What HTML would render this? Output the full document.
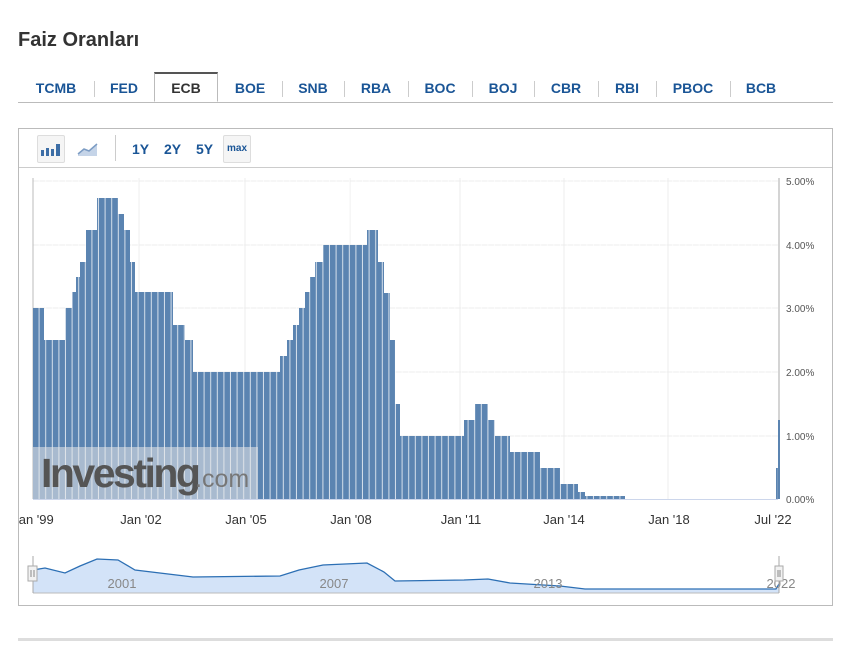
<!DOCTYPE html>
<html><head><meta charset="utf-8"><style>
body{margin:0;width:846px;height:657px;background:#fff;font-family:"Liberation Sans",Arial,sans-serif;position:relative;overflow:hidden}
h1{position:absolute;left:18px;top:29px;margin:0;font-size:20px;font-weight:bold;color:#333}
.tabs{position:absolute;left:18px;top:74px;width:815px;height:28px;border-bottom:1px solid #bbb}
.tab{position:absolute;top:0;height:28px;line-height:29px;text-align:center;font-size:14px;font-weight:bold;color:#1a5596}
.sep{position:absolute;top:7px;width:1px;height:16px;background:#ccc}
.act{color:#333;border:1px solid #bbb;border-top:2px solid #555;border-bottom:1px solid #fff;background:#fff;height:27px;top:-2px;box-sizing:content-box}
.box{position:absolute;left:18px;top:128px;width:813px;height:476px;border:1px solid #bbb}
.tb{position:absolute;left:0;top:0;width:813px;height:38px;border-bottom:1px solid #ccc}
.btn{position:absolute;top:6px;width:26px;height:26px;border:1px solid #ddd;border-radius:2px;background:#f5f5f5}
.per{position:absolute;top:12px;font-size:14px;font-weight:bold;color:#1a5596}
.bot{position:absolute;left:18px;top:638px;width:815px;height:3px;background:#ddd}
</style></head><body>
<h1>Faiz Oranları</h1>
<div class="tabs">
<div class="tab" style="left:0;width:76px">TCMB</div><div class="sep" style="left:76px"></div>
<div class="tab" style="left:76px;width:60px">FED</div>
<div class="tab act" style="left:136px;width:62px">ECB</div>
<div class="tab" style="left:200px;width:64px">BOE</div><div class="sep" style="left:264px"></div>
<div class="tab" style="left:264px;width:62px">SNB</div><div class="sep" style="left:326px"></div>
<div class="tab" style="left:326px;width:64px">RBA</div><div class="sep" style="left:390px"></div>
<div class="tab" style="left:390px;width:64px">BOC</div><div class="sep" style="left:454px"></div>
<div class="tab" style="left:454px;width:62px">BOJ</div><div class="sep" style="left:516px"></div>
<div class="tab" style="left:516px;width:64px">CBR</div><div class="sep" style="left:580px"></div>
<div class="tab" style="left:580px;width:58px">RBI</div><div class="sep" style="left:638px"></div>
<div class="tab" style="left:638px;width:74px">PBOC</div><div class="sep" style="left:712px"></div>
<div class="tab" style="left:712px;width:62px">BCB</div>
</div>
<div class="box">
<div class="tb">
<div class="btn" style="left:18px"><svg width="26" height="26"><rect x="3" y="14" width="3" height="6" fill="#3d6ea6"/><rect x="8" y="12" width="3" height="8" fill="#3d6ea6"/><rect x="13" y="13" width="3" height="7" fill="#3d6ea6"/><rect x="18" y="8" width="4" height="12" fill="#3d6ea6"/></svg></div>
<svg style="position:absolute;left:58px;top:12px" width="22" height="16"><path d="M1 13 L7 8 L12 10 L20 3 L20 15 L1 15Z" fill="#c5d4e8"/><path d="M1 13 L7 8 L12 10 L20 3" stroke="#7c9cc4" stroke-width="1.5" fill="none"/></svg>
<div style="position:absolute;left:96px;top:6px;width:1px;height:26px;background:#ccc"></div>
<div class="per" style="left:113px">1Y</div><div class="per" style="left:145px">2Y</div><div class="per" style="left:177px">5Y</div>
<div class="btn" style="left:204px;font-size:10px;font-weight:bold;color:#1a5596;text-align:center;line-height:26px;width:26px">max</div>
</div>
</div>
<svg style="position:absolute;left:0;top:0" width="846" height="657">
<defs><pattern id="gp" width="6.6" height="10" patternUnits="userSpaceOnUse" x="33"><rect x="5.6" y="0" width="1" height="10" fill="#fff" opacity=".75"/></pattern>
<clipPath id="cl"><rect x="19" y="0" width="827" height="657"/></clipPath></defs>
<g stroke="#ececec" stroke-width="1">
<line x1="33" y1="181" x2="778" y2="181"/><line x1="33" y1="245" x2="778" y2="245"/><line x1="33" y1="308" x2="778" y2="308"/><line x1="33" y1="372" x2="778" y2="372"/><line x1="33" y1="436" x2="778" y2="436"/>
<line x1="139" y1="178" x2="139" y2="499"/><line x1="245" y1="178" x2="245" y2="499"/><line x1="350" y1="178" x2="350" y2="499"/><line x1="460" y1="178" x2="460" y2="499"/><line x1="564" y1="178" x2="564" y2="499"/><line x1="668" y1="178" x2="668" y2="499"/>
</g>
<line x1="33" y1="178" x2="33" y2="499" stroke="#bbb"/>
<line x1="779" y1="178" x2="779" y2="499" stroke="#aaa"/>
<path d="M33 499 V308 H44 V340 H65 V308 H72 V292 H76 V277 H80 V262 H86 V230 H97 V198 H118 V214 H124 V230 H130 V262 H135 V292 H173 V325 H185 V340 H193 V372 H280 V356 H287 V340 H293 V325 H299 V308 H305 V292 H310 V277 H315 V262 H323 V245 H367 V230 H378 V262 H384 V293 H390 V340 H395 V404 H400 V436 H464 V420 H475 V404 H488 V420 H495 V436 H510 V452 H540 V468 H560 V484 H578 V492 H585 V496 H625 V499 H776 V468 H778 V420 H780 V499Z" fill="#5b84b1"/>
<rect x="33" y="178" width="745" height="322" fill="url(#gp)"/>
<line x1="33" y1="499.5" x2="778" y2="499.5" stroke="#ccd6eb"/>
<rect x="33" y="447" width="225" height="52" fill="#e8e8e8" opacity=".55"/>
<text x="41" y="487" font-size="41" font-weight="bold" fill="#555" letter-spacing="-2.5" font-family="Liberation Sans,sans-serif">Investing</text>
<text x="195" y="487" font-size="25" fill="#777" font-family="Liberation Sans,sans-serif">.com</text>
<g font-size="10" fill="#555" font-family="Liberation Sans,sans-serif">
<text x="786" y="185">5.00%</text><text x="786" y="249">4.00%</text><text x="786" y="312">3.00%</text><text x="786" y="376">2.00%</text><text x="786" y="440">1.00%</text><text x="786" y="503">0.00%</text>
</g>
<g font-size="13" fill="#333" text-anchor="middle" font-family="Liberation Sans,sans-serif" clip-path="url(#cl)">
<text x="33" y="524">Jan '99</text><text x="141" y="524">Jan '02</text><text x="246" y="524">Jan '05</text><text x="351" y="524">Jan '08</text><text x="461" y="524">Jan '11</text><text x="564" y="524">Jan '14</text><text x="669" y="524">Jan '18</text><text x="773" y="524">Jul '22</text>
</g>
<rect x="33" y="555" width="746" height="38" fill="#fff"/>
<path d="M33 570 L45 568 L65 573 L80 566 L97 559 L118 560 L135 570 L193 577 L280 576 L299 570 L323 565 L367 563 L384 572 L395 581 L464 580 L488 579 L510 583 L560 586 L585 589 L776 589 L779 584 L779 593 L33 593Z" fill="#d3e3f8"/>
<path d="M33 570 L45 568 L65 573 L80 566 L97 559 L118 560 L135 570 L193 577 L280 576 L299 570 L323 565 L367 563 L384 572 L395 581 L464 580 L488 579 L510 583 L560 586 L585 589 L776 589 L779 584" stroke="#2c6fb4" stroke-width="1.3" fill="none"/>
<line x1="33" y1="593" x2="779" y2="593" stroke="#bbb"/>
<g font-size="13" fill="#888" text-anchor="middle" font-family="Liberation Sans,sans-serif">
<text x="122" y="588">2001</text><text x="334" y="588">2007</text><text x="548" y="588">2013</text><text x="781" y="588">2022</text>
</g>
<line x1="33" y1="556" x2="33" y2="593" stroke="#aaa"/><line x1="779" y1="556" x2="779" y2="593" stroke="#aaa"/>
<rect x="28" y="566" width="9" height="15" fill="#f2f2f2" stroke="#aaa"/><rect x="775" y="566" width="8" height="15" fill="#f2f2f2" stroke="#aaa"/>
<line x1="31" y1="570" x2="31" y2="577" stroke="#888"/><line x1="34" y1="570" x2="34" y2="577" stroke="#888"/>
<line x1="778" y1="570" x2="778" y2="577" stroke="#888"/><line x1="780" y1="570" x2="780" y2="577" stroke="#888"/>
</svg>
<div class="bot"></div>
</body></html>
